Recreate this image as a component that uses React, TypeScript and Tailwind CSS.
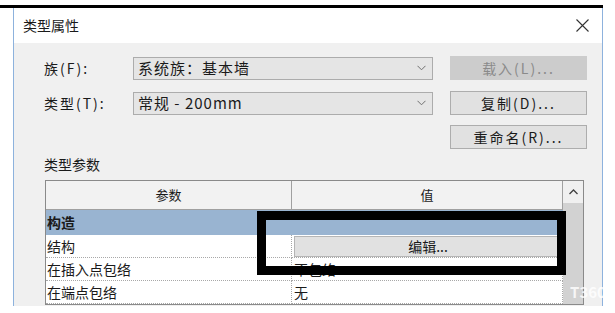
import { Fragment } from "react";

const font = { fontFamily: '"Noto Sans CJK SC", "Noto Sans", sans-serif' };

function Chevron() {
  return (
    <svg width="9" height="6" viewBox="0 0 9 6" className="text-[#707070]">
      <path d="M0.5 0.8 L4.5 4.8 L8.5 0.8" fill="none" stroke="currentColor" strokeWidth="1" />
    </svg>
  );
}

function Combo({ text }: { text: string }) {
  return (
    <div className="flex h-[23px] w-[300px] items-center justify-between border border-[#acacac] bg-[#e5e5e5] pl-[4px] pr-[6px] text-[15px] text-[#1a1a1a]">
      <span className="tracking-[1px]">{text}</span>
      <Chevron />
    </div>
  );
}

function Btn({ text, disabled }: { text: string; disabled?: boolean }) {
  return (
    <div
      className={
        disabled
          ? "flex h-[24px] w-[137px] items-center justify-center border border-[#cccccc] bg-[#cccccc] text-[14px] tracking-[2px] text-[#8a8a8a]"
          : "flex h-[24px] w-[137px] items-center justify-center border border-[#adadad] bg-[#e1e1e1] text-[14px] tracking-[2px] text-[#1a1a1a]"
      }
    >
      {text}
    </div>
  );
}

const rows = [
  { name: "结构", value: "edit" },
  { name: "在插入点包络", value: "不包络" },
  { name: "在端点包络", value: "无" },
];

export default function App() {
  return (
    <div className="relative h-[313px] w-[615px] overflow-hidden bg-white" style={font}>
      <div className="mt-[5px] h-[3px] w-[603px] bg-black" />
      <div className="ml-[13px] flex h-[298px] w-[590px] flex-col border-x border-[#8db2dd] bg-[#f0f0f0]">
        <div className="flex h-[35px] items-center justify-between bg-white pl-[9px] pr-[13px]">
          <span className="text-[14px] text-[#1a1a1a]">类型属性</span>
          <svg width="13" height="13" viewBox="0 0 13 13">
            <path d="M0.5 0.5 L12.5 12.5 M12.5 0.5 L0.5 12.5" stroke="#333" strokeWidth="1.1" />
          </svg>
        </div>

        <div className="flex flex-col pl-[30px]">
          <div className="mt-[13px] flex items-center">
            <span className="w-[89px] text-[14px] tracking-[2px] text-[#1a1a1a]">族(F):</span>
            <Combo text="系统族：基本墙" />
            <div className="ml-[17px]">
              <Btn text="载入(L)..." disabled />
            </div>
          </div>
          <div className="mt-[11px] flex items-center">
            <span className="w-[89px] text-[14px] tracking-[2px] text-[#1a1a1a]">类型(T):</span>
            <Combo text="常规 - 200mm" />
            <div className="ml-[17px]">
              <Btn text="复制(D)..." />
            </div>
          </div>
          <div className="mt-[10px] flex">
            <div className="ml-[406px]">
              <Btn text="重命名(R)..." />
            </div>
          </div>

          <div className="mt-[5px] text-[14px] leading-[20px] text-[#1a1a1a]">类型参数</div>

          <div className="ml-[1px] mt-[6px] flex w-[539px] border border-[#8a8a8a] bg-white text-[14px] text-[#1a1a1a]">
            <div className="grid flex-1 grid-cols-[246px_1fr]">
              <div className="flex h-[29px] items-center justify-center border-b border-r border-[#a0a0a0] bg-[#f2f2f2] text-[13px]">参数</div>
              <div className="flex h-[29px] items-center justify-center border-b border-r border-[#a0a0a0] bg-[#f2f2f2] text-[13px]">值</div>
              <div className="col-span-2 flex h-[25px] items-center bg-[#99b4d1] pl-[1px] font-bold">构造</div>
              {rows.map((r) => (
                <Fragment key={r.name}>
                  <div className="flex h-[23px] items-center border-b border-r border-dotted border-[#a8a8a8] pl-[1px]">{r.name}</div>
                  <div className="flex h-[23px] items-center border-b border-r border-dotted border-[#a8a8a8] pl-[2px]">
                    {r.value === "edit" ? (
                      <div className="flex h-[21px] w-full items-center justify-center border border-[#b5b5b5] bg-[#e1e1e1]">编辑...</div>
                    ) : (
                      r.value
                    )}
                  </div>
                </Fragment>
              ))}
            </div>
            <div className="flex w-[20px] flex-col">
              <div className="flex h-[22px] items-center justify-center bg-[#f0f0f0]">
                <svg width="9" height="6" viewBox="0 0 9 6">
                  <path d="M0.5 5 L4.5 1 L8.5 5" fill="none" stroke="#404040" strokeWidth="1.3" />
                </svg>
              </div>
              <div className="flex-1 bg-[#d2d2d2]" />
            </div>
          </div>
        </div>
      </div>

      <div className="absolute left-[257px] top-[211px] h-[64px] w-[309px] border-[9px] border-black" />
      <div className="absolute left-[570px] top-[281px] text-[15px] font-semibold text-white opacity-80">T360</div>
    </div>
  );
}
